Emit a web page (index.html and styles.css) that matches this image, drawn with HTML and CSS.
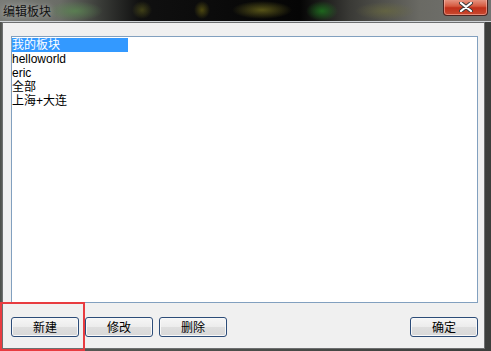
FILE: index.html
```html
<!DOCTYPE html>
<html lang="zh-CN">
<head>
    <meta charset="UTF-8">
    <title>编辑板块</title>
    <link rel="stylesheet" href="styles.css">
</head>
<body>
    <div class="window">
        <!-- Title bar (glass) -->
        <div class="titlebar">
            <span class="title">编辑板块</span>
            <div class="close-btn">
                <svg width="14" height="10" viewBox="0 0 14 10">
                    <path d="M2 1 L12 9 M12 1 L2 9" stroke="#3a3a3a" stroke-width="4" stroke-linecap="round"/>
                    <path d="M2 1 L12 9 M12 1 L2 9" stroke="#ffffff" stroke-width="2.2" stroke-linecap="round"/>
                </svg>
            </div>
        </div>

        <!-- Dialog body -->
        <div class="dialog">
            <ul class="listbox">
                <li><span class="selected">我的板块</span></li>
                <li>helloworld</li>
                <li>eric</li>
                <li>全部</li>
                <li>上海+大连</li>
            </ul>

            <div class="buttons">
                <div class="btn-group">
                    <button class="btn">新建</button>
                    <button class="btn">修改</button>
                    <button class="btn">删除</button>
                </div>
                <button class="btn">确定</button>
            </div>
        </div>

        <!-- red annotation box -->
        <div class="mark"></div>
    </div>
</body>
</html>
```

FILE: styles.css
```css
* {
    margin: 0;
    padding: 0;
    box-sizing: border-box;
}

body {
    width: 491px;
    height: 351px;
    overflow: hidden;
    background: #2a2d2a;
    font-family: "Liberation Sans", "Noto Sans CJK SC", sans-serif;
    font-size: 12px;
    color: #000;
}

.window {
    position: relative;
    width: 491px;
    height: 351px;
    display: flex;
    flex-direction: column;
    background: linear-gradient(90deg, #4a4d4a 0, #5a5d58 2px, #3c3e3c 100%);
    padding: 0 6px 2px 1px;
}

/* Title bar */
.titlebar {
    position: relative;
    height: 22px;
    margin: 0 -6px 0 -1px;
    padding-left: 3px;
    display: flex;
    align-items: center;
    background:
        radial-gradient(ellipse 28px 10px at 75px 11px, rgba(90, 140, 80, 0.7), transparent),
        radial-gradient(ellipse 10px 9px at 142px 10px, rgba(110, 110, 30, 0.5), transparent),
        radial-gradient(ellipse 8px 9px at 202px 10px, rgba(140, 130, 20, 0.5), transparent),
        radial-gradient(ellipse 30px 9px at 262px 10px, rgba(120, 115, 30, 0.7), transparent),
        radial-gradient(ellipse 16px 10px at 322px 11px, rgba(30, 120, 30, 0.8), transparent),
        radial-gradient(ellipse 30px 9px at 385px 11px, rgba(110, 110, 60, 0.6), transparent),
        linear-gradient(90deg, #7a7c78 0, #6a6c66 60px, #3a3c38 100px, #101010 140px, #050505 300px, #3a3a36 350px, #6a6a64 420px, #727270 491px);
    border-bottom: 1px solid #cfd3d6;
}

.title {
    font-family: "Noto Sans CJK SC", sans-serif;
    font-size: 12px;
    line-height: 14px;
    color: #101010;
    text-shadow: 0 0 6px rgba(255, 255, 255, 0.6);
}

.close-btn {
    position: absolute;
    right: 3px;
    top: -1px;
    width: 45px;
    height: 17px;
    display: flex;
    align-items: center;
    justify-content: center;
    border: 1px solid #4a2420;
    border-top: none;
    border-radius: 0 0 4px 4px;
    background: linear-gradient(#e89c8a 0, #d55a40 45%, #c0301a 55%, #c84a30 100%);
    box-shadow: inset 0 0 0 1px rgba(255, 200, 190, 0.5);
}

/* Dialog body */
.dialog {
    flex: 1;
    display: flex;
    flex-direction: column;
    background: #f0f0f0;
    border: 1px solid #6d6f70;
    margin-left: 1px;
    padding: 13px 6px 11px 8px;
}

.listbox {
    list-style: none;
    height: 267px;
    background: #fff;
    border: 1px solid #82a0bf;
    padding-top: 1px;
}

.listbox li {
    height: 14px;
    line-height: 14px;
    font-size: 12px;
    white-space: nowrap;
}

.selected {
    display: inline-block;
    width: 116px;
    background: #3399ff;
    color: #fff;
}

.buttons {
    display: flex;
    justify-content: space-between;
    margin-top: 14px;
}

.btn-group {
    display: flex;
    gap: 6px;
}

.btn {
    width: 68px;
    height: 20px;
    font-family: "Noto Sans CJK SC", sans-serif;
    font-size: 12px;
    line-height: 16px;
    color: #000;
    border: 1px solid #2c4c78;
    border-radius: 3px;
    background: linear-gradient(#f6f6f6 0, #ececec 50%, #dedede 51%, #d8d8d8 100%);
    box-shadow: inset 0 0 0 1px #f8f8f8;
}

/* red annotation */
.mark {
    position: absolute;
    left: 0;
    top: 302px;
    width: 85px;
    height: 49px;
    border: 2px solid #e83c40;
}
```
